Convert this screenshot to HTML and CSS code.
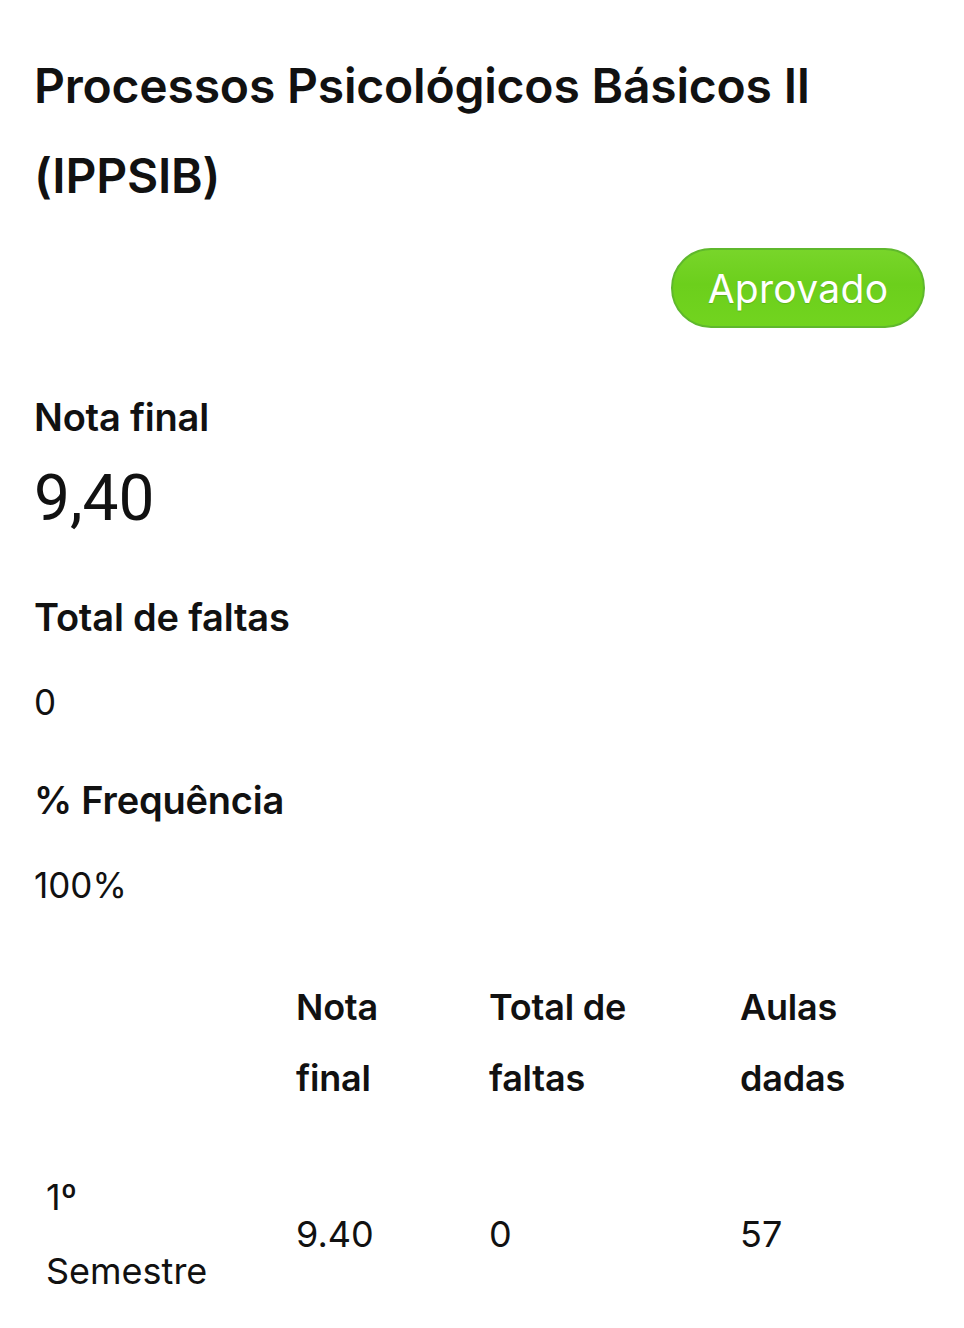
FILE: index.html
```html
<!DOCTYPE html>
<html lang="pt-BR">
<head>
<meta charset="utf-8">
<title>Processos Psicológicos Básicos II</title>
<link rel="stylesheet" href="styles.css">
</head>
<body>
<main class="page">
  <h1 class="title">Processos Psicológicos Básicos II (IPPSIB)</h1>
  <div class="status-row"><span class="badge">Aprovado</span></div>

  <section class="stat stat-first">
    <h2 class="stat-label">Nota final</h2>
    <p class="stat-grade">9,40</p>
  </section>

  <section class="stat stat-after-grade">
    <h2 class="stat-label">Total de faltas</h2>
    <p class="stat-value">0</p>
  </section>

  <section class="stat">
    <h2 class="stat-label">% Frequência</h2>
    <p class="stat-value">100%</p>
  </section>

  <table class="grades">
    <colgroup>
      <col class="c1"><col class="c2"><col class="c3"><col class="c4">
    </colgroup>
    <thead>
      <tr>
        <th class="period-head"></th>
        <th>Nota final</th>
        <th>Total de faltas</th>
        <th>Aulas dadas</th>
      </tr>
    </thead>
    <tbody>
      <tr>
        <td class="period">1º Semestre</td>
        <td>9.40</td>
        <td>0</td>
        <td>57</td>
      </tr>
    </tbody>
  </table>
</main>
</body>
</html>
```
FILE: styles.css
```css
* { box-sizing: border-box; }
html, body { margin: 0; padding: 0; background: #ffffff; }
body {
  font-family: "Inter", "Noto Sans", sans-serif;
  color: #111111;
}
.page {
  width: 964px;
  padding: 41px 39px 0 34px;
}
.title {
  margin: 0;
  max-width: 840px;
  font-size: 48px;
  font-weight: 600;
  line-height: 90px;
  letter-spacing: -0.2px;
}
.status-row {
  display: flex;
  justify-content: flex-end;
  margin-top: 27px;
}
.badge {
  display: inline-flex;
  align-items: center;
  justify-content: center;
  width: 254px;
  height: 80px;
  border-radius: 40px;
  border: 2px solid #5fb82c;
  background: linear-gradient(#78d52a, #6ccf1c 45%, #72d41f);
  color: #ffffff;
  font-size: 39px;
  font-weight: 400;
  letter-spacing: 0.3px;
  text-shadow: 0 1px 1px rgba(0,0,0,0.15);
}
.stat { margin: 0; }
.stat-first { margin-top: 64px; }
.stat + .stat { margin-top: 48px; }
.stat.stat-after-grade { margin-top: 55px; }
.stat-label {
  margin: 0;
  font-size: 38px;
  font-weight: 600;
  line-height: 50px;
  letter-spacing: -0.2px;
}
.stat-grade {
  margin: 18px 0 0;
  font-family: "Roboto", sans-serif;
  font-size: 64px;
  font-weight: 400;
  line-height: 77px;
}
.stat-value {
  margin: 35px 0 0;
  font-size: 35px;
  font-weight: 400;
  line-height: 50px;
}
.grades {
  margin-top: 62px;
  width: 891px;
  table-layout: fixed;
  border-collapse: collapse;
}
.c1 { width: 250px; }
.c2 { width: 193px; }
.c3 { width: 251px; }
.c4 { width: 197px; }
.grades th {
  text-align: left;
  vertical-align: middle;
  padding: 0 30px 0 12px;
  font-size: 36px;
  font-weight: 600;
  line-height: 71px;
  letter-spacing: -0.2px;
}
.grades td {
  vertical-align: middle;
  padding: 46px 12px 0;
  font-size: 36px;
  font-weight: 400;
  line-height: 74px;
}
.grades td.period { padding-right: 50px; }
```
